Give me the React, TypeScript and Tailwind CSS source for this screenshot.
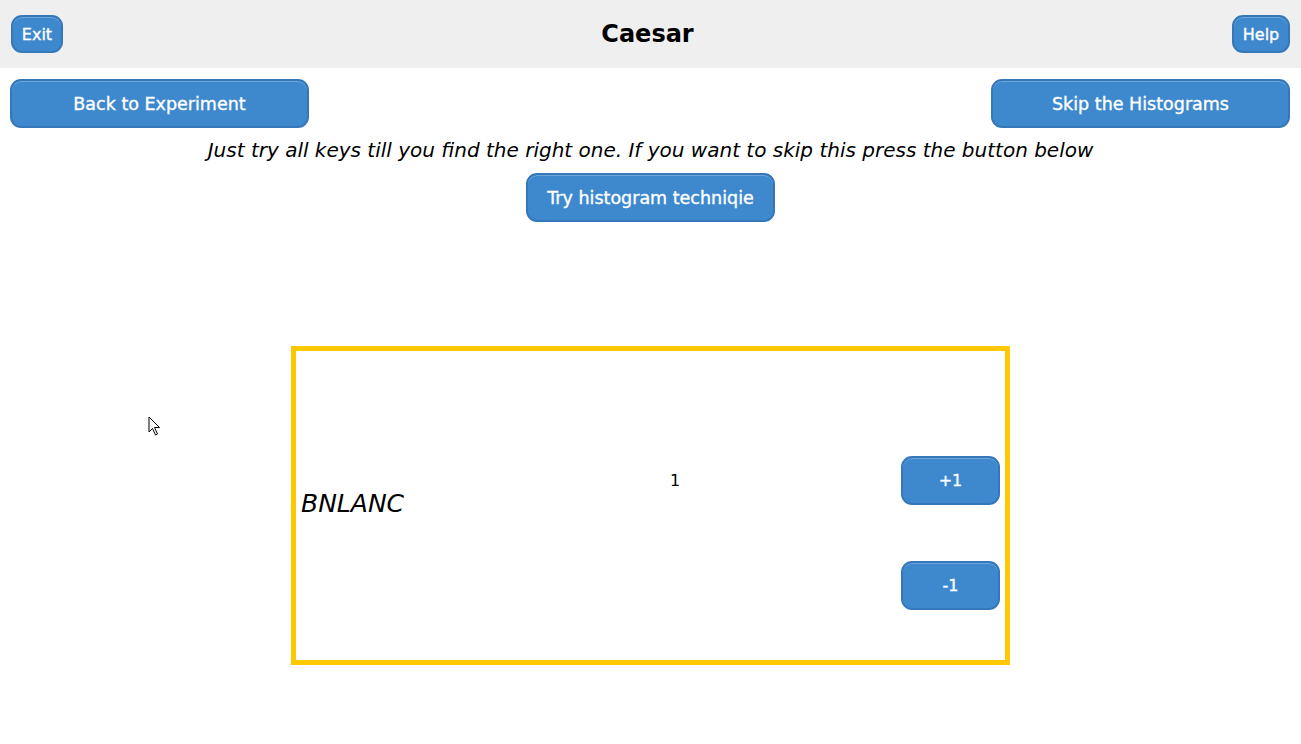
import React, { useState } from "react";

const btn =
  "flex items-center justify-center rounded-[11px] border-2 border-[#3578ba] bg-[#3e89cd] text-white shadow-[inset_0_1px_0_rgba(255,255,255,0.25)] [-webkit-text-stroke:0.35px_white]";

export default function App() {
  const [key, setKey] = useState(1);

  return (
    <div
      className="relative min-h-screen w-full bg-white text-black"
      style={{ fontFamily: '"DejaVu Sans", Verdana, sans-serif' }}
    >
      {/* Header */}
      <header className="flex h-[68px] items-center justify-between bg-[#efefef] px-[11px]">
        <button className={`${btn} h-[38px] w-[52px] pt-[1px] text-[16px]`}>Exit</button>
        <h1 className="text-[24px] font-bold">Caesar</h1>
        <button className={`${btn} h-[38px] w-[58px] pt-[1px] text-[16px]`}>Help</button>
      </header>

      {/* Navigation */}
      <div className="mt-[11px] flex justify-between pl-[10px] pr-[11px]">
        <button className={`${btn} h-[49px] w-[299px] pt-[1px] text-[17.5px]`}>Back to Experiment</button>
        <button className={`${btn} h-[49px] w-[299px] pt-[1px] text-[17.5px]`}>Skip the Histograms</button>
      </div>

      <p className="mt-[10px] text-center text-[20px] italic leading-[24px]">
        Just try all keys till you find the right one. If you want to skip this press the button below
      </p>

      <div className="mt-[11px] flex justify-center">
        <button className={`${btn} h-[49px] w-[249px] pt-[1px] text-[17.5px]`}>Try histogram techniqie</button>
      </div>

      {/* Key trial panel */}
      <div className="mx-auto mt-[124px] flex h-[319px] w-[719px] border-[5px] border-[#ffc800] p-[5px]">
        <div className="flex w-[369px] items-center">
          <span className="-mt-[4px] text-[25px] italic">BNLANC</span>
        </div>
        <div className="flex-1 pt-[115px] text-[16px] leading-[20px]">{key}</div>
        <div className="flex flex-col gap-[56px] pt-[100px]">
          <button onClick={() => setKey(key + 1)} className={`${btn} h-[49px] w-[99px] pt-[1px] text-[16px]`}>
            +1
          </button>
          <button onClick={() => setKey(key - 1)} className={`${btn} h-[49px] w-[99px] pt-[1px] text-[16px]`}>
            -1
          </button>
        </div>
      </div>

      {/* mouse pointer */}
      <svg className="absolute left-[148px] top-[416px]" width="14" height="21" viewBox="0 0 14 21">
        <path d="M1 1 L1 16 L4.5 12.5 L7.5 19 L9.5 18 L6.5 11.5 L11.5 11.5 Z" fill="white" stroke="black" strokeWidth="1" strokeLinejoin="round" />
      </svg>
    </div>
  );
}
